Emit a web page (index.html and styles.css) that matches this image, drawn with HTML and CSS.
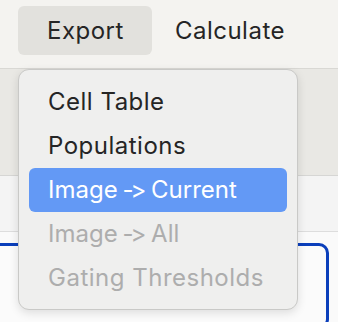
FILE: index.html
```html
<!DOCTYPE html>
<html lang="en">
<head>
    <meta charset="UTF-8">
    <title>Export menu</title>
    <link rel="stylesheet" href="styles.css">
</head>
<body>
    <div class="toolbar">
        <button class="menu-button active">Export</button>
        <button class="menu-button">Calculate</button>
    </div>
    <div class="band"></div>
    <div class="subbar"></div>
    <div class="content">
        <div class="panel"></div>
    </div>

    <div class="dropdown">
        <div class="item">Cell Table</div>
        <div class="item">Populations</div>
        <div class="item selected tight">Image <span class="arrow">-&gt;</span> Current</div>
        <div class="item disabled tight">Image <span class="arrow">-&gt;</span> All</div>
        <div class="item disabled">Gating Thresholds</div>
    </div>
</body>
</html>
```

FILE: styles.css
```css
body {
    margin: 0;
    font-family: 'Inter', 'Noto Sans', sans-serif;
    font-feature-settings: "calt" 0, "liga" 0;
    background: #fafafa;
    width: 338px;
    height: 322px;
    overflow: hidden;
    position: relative;
    color: #252525;
}

.toolbar {
    height: 62px;
    padding: 6px 0 0 18px;
    background: #f4f3f0;
    border-bottom: 1px solid #d9d8d4;
    display: flex;
    align-items: flex-start;
}

.menu-button {
    font-family: inherit;
    font-feature-settings: inherit;
    font-size: 24px;
    letter-spacing: 0.5px;
    color: #252525;
    background: none;
    border: none;
    height: 49px;
    padding: 0 28px 1px 29px;
    border-radius: 6px;
}

.menu-button.active {
    background: #e2e1dd;
}

.menu-button + .menu-button {
    padding-left: 23px;
}

.band {
    height: 106px;
    background: #e9e8e4;
    border-bottom: 1px solid #d6d6d4;
}

.subbar {
    height: 55px;
    background: #f4f4f4;
    border-bottom: 1px solid #dddddd;
}

.content {
    padding-top: 11px;
}

.panel {
    margin-left: -20px;
    width: 343px;
    height: 80px;
    border: 3px solid #0b3fbb;
    border-radius: 10px;
    background: #fbfbfb;
}

/* dropdown sits over the page */
.dropdown {
    position: absolute;
    top: 69px;
    left: 18px;
    width: 258px;
    padding: 10px 10px 9px 10px;
    background: #efefee;
    border: 1px solid #c9c9c7;
    border-radius: 11px;
    box-shadow: 0 3px 10px rgba(0, 0, 0, 0.12);
}

.item {
    height: 44px;
    line-height: 44px;
    padding-left: 19px;
    font-size: 24px;
    letter-spacing: 0.5px;
    border-radius: 6px;
    white-space: nowrap;
}

.item.tight {
    letter-spacing: 0;
    word-spacing: -2px;
}

.arrow {
    letter-spacing: -3px;
    margin-right: 3px;
}

.item.selected {
    background: #6399f5;
    color: #ffffff;
}

.item.disabled {
    color: #adadad;
}
```
